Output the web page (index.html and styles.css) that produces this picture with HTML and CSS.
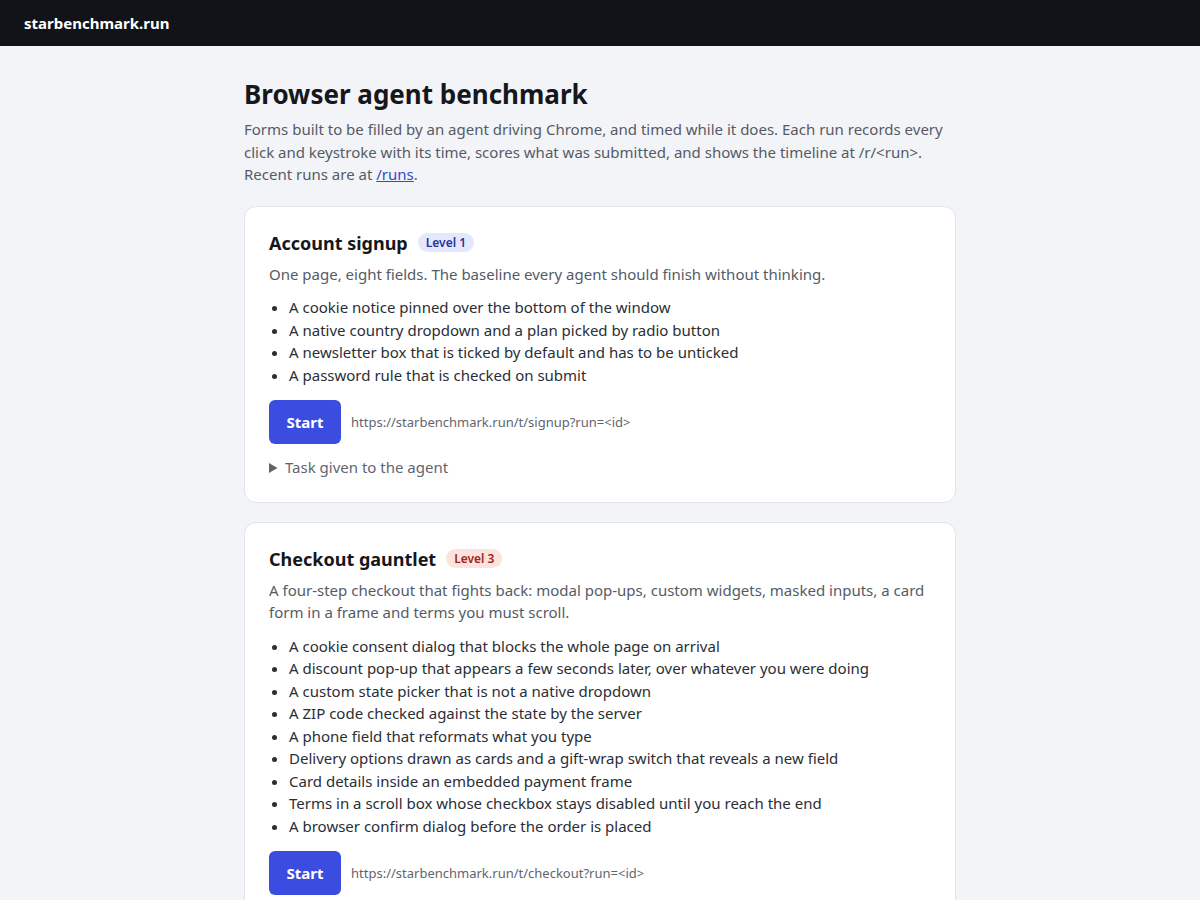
FILE: index.html
```html
<!DOCTYPE html>
<html lang="en">
<head>
<meta charset="utf-8">
<title>starbenchmark.run</title>
<link rel="stylesheet" href="styles.css">
</head>
<body>
<header class="topbar"><span class="brand">starbenchmark.run</span></header>
<main class="wrap">
  <h1 class="title">Browser agent benchmark</h1>
  <p class="intro">Forms built to be filled by an agent driving Chrome, and timed while it does. Each run records every click and keystroke with its time, scores what was submitted, and shows the timeline at /r/&lt;run&gt;. Recent runs are at <a href="#" class="link">/runs</a>.</p>

  <section class="card">
    <div class="card-head"><h2 class="card-title">Account signup</h2><span class="badge badge-1">Level 1</span></div>
    <p class="desc">One page, eight fields. The baseline every agent should finish without thinking.</p>
    <ul class="list">
      <li>A cookie notice pinned over the bottom of the window</li>
      <li>A native country dropdown and a plan picked by radio button</li>
      <li>A newsletter box that is ticked by default and has to be unticked</li>
      <li>A password rule that is checked on submit</li>
    </ul>
    <div class="actions"><a href="#" class="btn">Start</a><span class="url">https://starbenchmark.run/t/signup?run=&lt;id&gt;</span></div>
    <details class="task"><summary>Task given to the agent</summary></details>
  </section>

  <section class="card">
    <div class="card-head"><h2 class="card-title">Checkout gauntlet</h2><span class="badge badge-3">Level 3</span></div>
    <p class="desc">A four-step checkout that fights back: modal pop-ups, custom widgets, masked inputs, a card form in a frame and terms you must scroll.</p>
    <ul class="list">
      <li>A cookie consent dialog that blocks the whole page on arrival</li>
      <li>A discount pop-up that appears a few seconds later, over whatever you were doing</li>
      <li>A custom state picker that is not a native dropdown</li>
      <li>A ZIP code checked against the state by the server</li>
      <li>A phone field that reformats what you type</li>
      <li>Delivery options drawn as cards and a gift-wrap switch that reveals a new field</li>
      <li>Card details inside an embedded payment frame</li>
      <li>Terms in a scroll box whose checkbox stays disabled until you reach the end</li>
      <li>A browser confirm dialog before the order is placed</li>
    </ul>
    <div class="actions"><a href="#" class="btn">Start</a><span class="url">https://starbenchmark.run/t/checkout?run=&lt;id&gt;</span></div>
    <details class="task"><summary>Task given to the agent</summary></details>
  </section>
</main>
</body>
</html>
```
FILE: styles.css
```css
* { box-sizing: border-box; }
html, body { margin: 0; padding: 0; }
body {
  background: #f3f4f7;
  font-family: "Noto Sans", "Open Sans", sans-serif;
  color: #15171c;
}
.topbar {
  height: 46px;
  background: #111318;
  display: flex;
  align-items: center;
  padding: 0 24px;
}
.brand {
  color: #ffffff;
  font-weight: 700;
  font-size: 15px;
}
.wrap {
  max-width: 712px;
  margin: 0 auto;
  padding: 31px 0 40px;
}
.title {
  font-size: 26px;
  font-weight: 700;
  margin: 0 0 7px;
  line-height: 34px;
  color: #15171c;
}
.intro {
  font-size: 15px;
  line-height: 22.5px;
  color: #555b66;
  margin: 0 0 20px;
}
.link { color: #3346d3; }
.card {
  background: #fff;
  border: 1px solid #e2e4e9;
  border-radius: 12px;
  padding: 23px 24px 24px;
  margin-bottom: 19px;
}
.card-head {
  display: flex;
  align-items: center;
  gap: 10px;
  margin-bottom: 7px;
}
.card-title {
  margin: 0;
  font-size: 18px;
  font-weight: 700;
  line-height: 26px;
  color: #15171c;
}
.badge {
  font-size: 12px;
  font-weight: 600;
  padding: 1px 8px;
  border-radius: 999px;
  line-height: 17px;
}
.badge-1 { background: #e5e8fc; color: #28339b; }
.badge-3 { background: #fde3de; color: #a1231a; }
.desc {
  font-size: 15px;
  line-height: 22.5px;
  color: #555b66;
  margin: 0 0 11px;
}
.list {
  margin: 0 0 13.5px;
  padding-left: 20px;
  font-size: 15px;
  line-height: 22.5px;
  color: #2a2e36;
}
.actions {
  display: flex;
  align-items: center;
  gap: 10px;
}
.btn {
  display: inline-flex;
  align-items: center;
  justify-content: center;
  width: 72px;
  height: 44px;
  background: #3a4de0;
  color: #fff;
  font-weight: 700;
  font-size: 15px;
  border-radius: 6px;
  text-decoration: none;
}
.url {
  font-size: 13px;
  color: #5f6570;
}
.task {
  margin-top: 12px;
  font-size: 15px;
  line-height: 22px;
  color: #5f6570;
}
.task summary { cursor: pointer; }
```
